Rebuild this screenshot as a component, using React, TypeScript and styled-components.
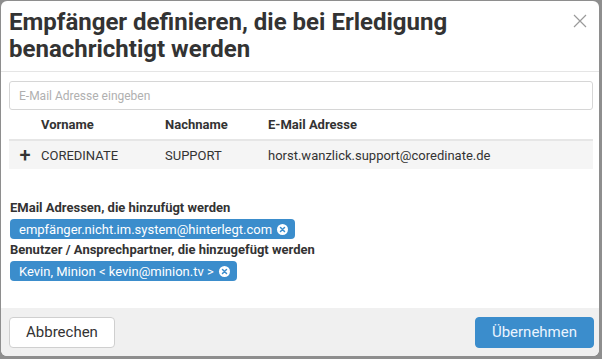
import { createGlobalStyle, styled } from "styled-components";

const GlobalStyle = createGlobalStyle`
  html, body {
    margin: 0;
    padding: 0;
    background: #8e8e8e;
  }
  body {
    font-family: Roboto, "Liberation Sans", sans-serif;
    color: #333;
  }
`;

const Dialog = styled.div`
  width: 598px;
  height: 355px;
  margin: 1px 0 0 1px;
  background: #fff;
  border-radius: 6px;
  display: flex;
  flex-direction: column;
  overflow: hidden;
`;

const Header = styled.div`
  display: flex;
  justify-content: space-between;
  align-items: flex-start;
  padding: 8px 12px 8px 8px;
  border-bottom: 1px solid #e5e5e5;
`;

const Title = styled.h1`
  margin: 0;
  font-size: 24px;
  line-height: 27px;
  font-weight: 700;
  color: #333;
  max-width: 480px;
`;

const CloseButton = styled.button`
  border: 0;
  background: none;
  padding: 0;
  margin: 5px 0 0 0;
  width: 14px;
  height: 14px;
  cursor: pointer;
`;

const Body = styled.div`
  flex: 1;
  padding: 9px 6px 0 8px;
`;

const Input = styled.input`
  box-sizing: border-box;
  width: 100%;
  height: 29px;
  border: 1px solid #d6d6d6;
  border-radius: 3px;
  padding: 0 9px;
  font-family: inherit;
  font-size: 12px;
  color: #333;
  outline: none;
  &::placeholder {
    color: #b0b0b0;
  }
`;

const Table = styled.table`
  width: 100%;
  border-collapse: collapse;
  font-size: 13px;
`;

const Th = styled.th<{ $w?: number }>`
  text-align: left;
  font-weight: 700;
  height: 29px;
  padding: 0;
  width: ${(p) => (p.$w ? `${p.$w}px` : "auto")};
  border-bottom: 2px solid #e6e6e6;
`;

const Row = styled.tr`
  background: #f5f5f5;
`;

const Td = styled.td`
  height: 28px;
  padding: 0;
  color: #333;
`;

const PlusCell = styled(Td)`
  text-align: center;
  font-size: 20px;
  font-weight: 500;
`;

const Section = styled.div`
  margin-top: 31px;
  display: flex;
  flex-direction: column;
  align-items: flex-start;
  gap: 3px;
`;

const Label = styled.div`
  font-size: 13px;
  font-weight: 700;
  line-height: 16px;
  margin-left: 1px;
`;

const Chip = styled.span`
  display: inline-flex;
  align-items: center;
  gap: 5px;
  height: 20px;
  padding: 0 7px 0 9px;
  margin-left: 1px;
  border-radius: 4px;
  background: #3b8dcc;
  color: #fff;
  font-size: 13px;
`;

const ChipX = styled.span`
  width: 11px;
  height: 11px;
  border-radius: 50%;
  background: #fff;
  display: inline-flex;
  align-items: center;
  justify-content: center;
`;

const Footer = styled.div`
  display: flex;
  justify-content: space-between;
  align-items: center;
  height: 48px;
  padding: 0 5px 0 8px;
  background: #f0f0f0;
`;

const Button = styled.button<{ $primary?: boolean }>`
  height: 31px;
  padding: 0 16px;
  border-radius: 4px;
  font-family: inherit;
  font-size: 15px;
  cursor: pointer;
  border: 1px solid ${(p) => (p.$primary ? "#3b8dcc" : "#cfcfcf")};
  background: ${(p) => (p.$primary ? "#3b8dcc" : "#fff")};
  color: ${(p) => (p.$primary ? "#eaf4ff" : "#333")};
`;

function RemoveIcon() {
  return (
    <ChipX>
      <svg width="7" height="7" viewBox="0 0 7 7">
        <path d="M1.5 1.5 L5.5 5.5 M5.5 1.5 L1.5 5.5" stroke="#3b8dcc" strokeWidth="1.5" strokeLinecap="round" />
      </svg>
    </ChipX>
  );
}

export default function App() {
  return (
    <>
      <GlobalStyle />
      <Dialog>
        <Header>
          <Title>Empfänger definieren, die bei Erledigung benachrichtigt werden</Title>
          <CloseButton aria-label="Schließen">
            <svg width="14" height="14" viewBox="0 0 14 14">
              <path d="M1 1 L13 13 M13 1 L1 13" stroke="#9a9a9a" strokeWidth="1.2" />
            </svg>
          </CloseButton>
        </Header>
        <Body>
          <Input placeholder="E-Mail Adresse eingeben" />
          <Table>
            <thead>
              <tr>
                <Th $w={32}></Th>
                <Th $w={124}>Vorname</Th>
                <Th $w={103}>Nachname</Th>
                <Th>E-Mail Adresse</Th>
              </tr>
            </thead>
            <tbody>
              <Row>
                <PlusCell>+</PlusCell>
                <Td>COREDINATE</Td>
                <Td>SUPPORT</Td>
                <Td>horst.wanzlick.support@coredinate.de</Td>
              </Row>
            </tbody>
          </Table>
          <Section>
            <Label>EMail Adressen, die hinzufügt werden</Label>
            <Chip>
              empfänger.nicht.im.system@hinterlegt.com
              <RemoveIcon />
            </Chip>
            <Label>Benutzer / Ansprechpartner, die hinzugefügt werden</Label>
            <Chip>
              Kevin, Minion &lt; kevin@minion.tv &gt;
              <RemoveIcon />
            </Chip>
          </Section>
        </Body>
        <Footer>
          <Button>Abbrechen</Button>
          <Button $primary>Übernehmen</Button>
        </Footer>
      </Dialog>
    </>
  );
}
